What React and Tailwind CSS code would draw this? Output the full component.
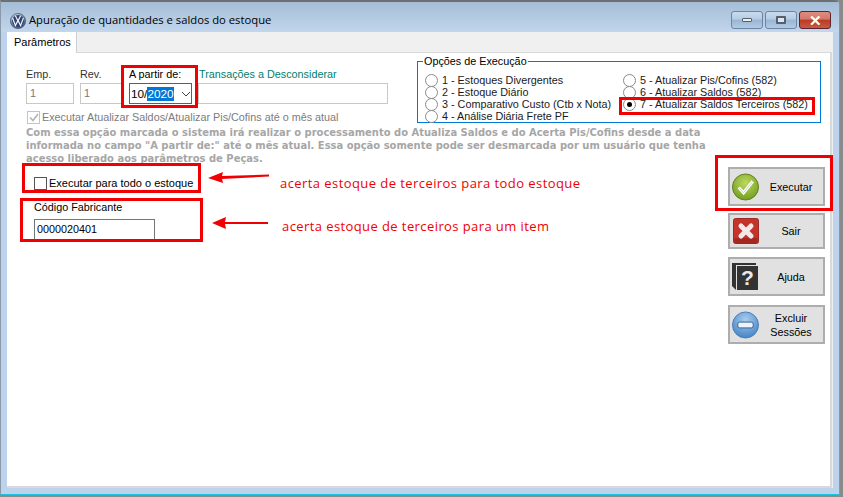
import React from "react";

const font = { fontFamily: '"Liberation Sans", Arial, sans-serif' };

function VwLogo() {
  return (
    <svg width="16" height="16" viewBox="0 0 16 16" className="shrink-0">
      <defs>
        <radialGradient id="vw" cx="40%" cy="30%" r="80%">
          <stop offset="0" stopColor="#e8eef6" />
          <stop offset="0.6" stopColor="#6f86a6" />
          <stop offset="1" stopColor="#2b3a55" />
        </radialGradient>
      </defs>
      <circle cx="8" cy="8" r="7.6" fill="url(#vw)" stroke="#3b4660" strokeWidth="0.6" />
      <circle cx="8" cy="8" r="6" fill="#2f4472" />
      <path d="M5.4 2.8 L8 8 L10.6 2.8 M2.6 5 L5.4 12.6 L8 7.4 L10.6 12.6 L13.4 5" fill="none" stroke="#f2f5f9" strokeWidth="1.2" />
    </svg>
  );
}

function WinButton({ close, children }) {
  return (
    <div
      className={
        close
          ? "w-[32px] h-[18px] rounded-[3px] border border-[#5d2330] bg-[linear-gradient(#dd8d7e_0%,#d4786a_45%,#b83c22_50%,#c65a44_100%)] flex items-center justify-center"
          : "w-[32px] h-[18px] rounded-[3px] border border-[#6f84a3] bg-[linear-gradient(#c9dbee_0%,#b6cce4_45%,#98b5d3_50%,#b3cbe3_100%)] flex items-center justify-center"
      }
    >
      {children}
    </div>
  );
}

function Radio({ checked, label }) {
  return (
    <div className="h-[12px] flex items-center">
      <span className="relative w-[13px] h-[13px] shrink-0 rounded-full border border-[#8a8a8a] bg-white flex items-center justify-center">
        {checked && <span className="w-[5px] h-[5px] rounded-full bg-black" />}
      </span>
      <span className="ml-[4px] whitespace-nowrap text-[10.8px] leading-[12px] text-[#1a1a1a]">{label}</span>
    </div>
  );
}

function ActionButton({ icon, children }) {
  return (
    <div className="w-[97px] h-full bg-[#e1e1e1] border-2 border-[#adadad] flex items-center pl-[2px] text-[10.8px] leading-[14px] text-black">
      <span className="w-[27px] shrink-0 flex justify-center">{icon}</span>
      <span className="flex-1 text-center">{children}</span>
    </div>
  );
}

function CheckIcon() {
  return (
    <svg width="28" height="28" viewBox="0 0 28 28">
      <defs>
        <radialGradient id="green" cx="50%" cy="35%" r="70%">
          <stop offset="0" stopColor="#bcd95e" />
          <stop offset="1" stopColor="#6f9a1f" />
        </radialGradient>
      </defs>
      <circle cx="14" cy="14" r="13.5" fill="url(#green)" stroke="#5c7f22" />
      <path d="M7 14.5 L12 20 L21.5 8" fill="none" stroke="#ffffff" strokeWidth="3.2" />
      <path d="M7 14.5 L12 20 L21.5 8" fill="none" stroke="#c9cfc0" strokeWidth="1" />
    </svg>
  );
}

function CloseIcon() {
  return (
    <svg width="26" height="26" viewBox="0 0 26 26">
      <rect x="0.5" y="0.5" width="25" height="25" rx="2" fill="#c4342c" stroke="#9c2a25" />
      <rect x="1.5" y="20" width="23" height="5" fill="#a5281f" />
      <path d="M8 8 L18 18 M18 8 L8 18" stroke="#f4e8e8" strokeWidth="5" strokeLinecap="round" />
    </svg>
  );
}

function BookIcon() {
  return (
    <svg width="27" height="29" viewBox="0 0 27 29">
      <path d="M0 1 L24 1 L24 3 L4 3 L4 28 L0 24 Z" fill="#333333" />
      <rect x="5" y="4" width="21" height="24" fill="#333333" />
      <text x="15.5" y="23" textAnchor="middle" fill="#e8e8e8" fontSize="21" fontWeight="700" fontFamily="Liberation Sans, sans-serif">?</text>
    </svg>
  );
}

function MinusIcon() {
  return (
    <svg width="28" height="28" viewBox="0 0 28 28">
      <defs>
        <radialGradient id="blue" cx="50%" cy="30%" r="75%">
          <stop offset="0" stopColor="#a9cdf0" />
          <stop offset="1" stopColor="#3f7fc2" />
        </radialGradient>
      </defs>
      <circle cx="14" cy="14" r="13.5" fill="url(#blue)" stroke="#4c7fb5" />
      <rect x="6" y="11" width="16" height="6" rx="2" fill="#eef3f8" stroke="#2f5f96" />
    </svg>
  );
}

function RedBox({ className }) {
  return <div className={"absolute border-[3px] border-[#f00000] pointer-events-none " + className} />;
}

export default function App() {
  return (
    <div style={font} className="relative w-[843px] h-[497px] overflow-hidden bg-[#8a8a8a]">
      <div className="w-[840px] h-[495px] rounded-tr-[6px] border-t-2 border-t-[#6f6f6f] border-b border-b-[#18c4e0] border-r border-r-[#18c4e0] border-l border-l-[#8a9aaa] bg-[#bdd2ec] flex flex-col">
        {/* title bar */}
        <div className="h-[30px] shrink-0 flex pl-[9px] pr-[8px] bg-[linear-gradient(#a4bdd6,#c2d6ec)]">
          <div className="flex items-center mt-[7px]">
            <VwLogo />
            <span className="ml-[3px] text-[11.25px] text-black whitespace-nowrap" style={{ fontFamily: '"Open Sans", sans-serif' }}>Apuração de quantidades e saldos do estoque</span>
          </div>
          <div className="ml-auto flex gap-[2px] pt-[9px]">
            <WinButton>
              <span className="w-[10px] h-[4px] rounded-[1px] bg-[#eeeeee] border border-[#55606e]" />
            </WinButton>
            <WinButton>
              <span className="w-[10px] h-[8px] rounded-[1px] border-2 border-[#55606e] bg-[#dfe6ee]" />
            </WinButton>
            <WinButton close>
              <span className="text-white font-bold text-[15px] leading-[15px]">✕</span>
            </WinButton>
          </div>
        </div>

        {/* client */}
        <div className="flex-1 ml-[6px] mr-[6px] mb-[6px] bg-[#f0f0f0] flex flex-col">
          <div className="h-[20px] shrink-0 flex">
            <div className="w-[70px] h-[21px] z-10 bg-white border-r border-r-[#d0d0d0] text-[11px] leading-[20px] pl-[7px] text-black">Parâmetros</div>
          </div>
          <div className="flex-1 mr-[1px] bg-white border-t border-t-[#d9d9d9] border-r-2 border-r-[#d9d9d9] border-b-2 border-b-[#d9d9d9] pl-[19px] pt-[8px]">
            <div className="flex">
              {/* fields */}
              <div className="w-[390px] shrink-0 pt-[6px]">
                <div className="flex text-[10.8px] leading-[14px]">
                  <div className="w-[54px] flex flex-col">
                    <span className="text-[#333333]">Emp.</span>
                    <div className="mt-[2px] w-[48px] h-[21px] border border-[#c8c8c8] text-[#777777] pl-[3px] leading-[19px]">1</div>
                  </div>
                  <div className="w-[49px] flex flex-col">
                    <span className="text-[#333333]">Rev.</span>
                    <div className="mt-[2px] w-[42px] h-[21px] border border-[#c8c8c8] text-[#777777] pl-[3px] leading-[19px]">1</div>
                  </div>
                  <div className="w-[69px] flex flex-col">
                    <span className="whitespace-nowrap text-black">A partir de:</span>
                    <div className="mt-[2px] w-[63px] h-[21px] border border-[#0078d7] bg-white flex items-center pl-[1px] text-[11.8px] text-black">
                      <span>10/</span>
                      <span className="bg-[#0078d7] text-white">2020</span>
                      <svg width="10" height="6" viewBox="0 0 10 6" className="ml-[7px]">
                        <path d="M1 1 L5 5 L9 1" fill="none" stroke="#444444" strokeWidth="1" />
                      </svg>
                    </div>
                  </div>
                  <div className="w-[190px] flex flex-col">
                    <span className="whitespace-nowrap text-[#00806b] pl-[1px]">Transações a Desconsiderar</span>
                    <div className="mt-[2px] h-[21px] border border-[#c8c8c8]" />
                  </div>
                </div>
                <div className="mt-[6px] ml-[1px] flex items-center h-[14px]">
                  <span className="w-[13px] h-[13px] shrink-0 border border-[#c4c4c4] flex items-center justify-center">
                    <svg width="10" height="9" viewBox="0 0 10 9">
                      <path d="M1 4.5 L4 7.5 L9 1" fill="none" stroke="#b4b4b4" strokeWidth="1.6" />
                    </svg>
                  </span>
                  <span className="ml-[2px] whitespace-nowrap text-[10.8px] text-[#7c7c7c]">Executar Atualizar Saldos/Atualizar Pis/Cofins até o mês atual</span>
                </div>
              </div>

              {/* group box */}
              <div className="relative w-[404px] h-[62px] ml-[1px] border border-[#0078d7] pl-[7px] pt-[12px] flex">
                <span className="absolute left-[5px] -top-[8px] bg-white px-[1px] text-[10.8px] leading-[14px] text-black">Opções de Execução</span>
                <div className="w-[198px] flex flex-col">
                  <Radio label="1 - Estoques Divergentes" />
                  <Radio label="2 - Estoque Diário" />
                  <Radio label="3 - Comparativo Custo (Ctb x Nota)" />
                  <Radio label="4 - Análise Diária Frete PF" />
                </div>
                <div className="flex flex-col">
                  <Radio label="5 - Atualizar Pis/Cofins (582)" />
                  <Radio label="6 - Atualizar Saldos (582)" />
                  <Radio checked label="7 - Atualizar Saldos Terceiros (582)" />
                </div>
              </div>
            </div>

            <p
              className="mt-[2px] whitespace-nowrap text-[9.97px] leading-[13px] font-bold text-[#a6a6a6]"
              style={{ fontFamily: '"DejaVu Sans", sans-serif' }}
            >
              Com essa opção marcada o sistema irá realizar o processamento do Atualiza Saldos e do Acerta Pis/Cofins desde a data
              <br />
              informada no campo "A partir de:" até o mês atual. Essa opção somente pode ser desmarcada por um usuário que tenha
              <br />
              acesso liberado aos parâmetros de Peças.
            </p>

            <div className="flex mt-[2px]">
              <div className="w-[702px] shrink-0 pl-[8px] pt-[9px]">
                <div className="flex items-center h-[14px]">
                  <span className="w-[13px] h-[13px] border border-[#555555] bg-white" />
                  <span className="ml-[2px] text-[11px] text-black">Executar para todo o estoque</span>
                </div>
                <div className="mt-[10px] text-[10.8px] leading-[14px] text-black">Código Fabricante</div>
                <div className="mt-[5px] w-[121px] h-[21px] border border-[#767676] pl-[2px] text-[10.8px] leading-[19px] text-black">0000020401</div>
              </div>
              <div className="flex flex-col">
                <div className="h-[39px] flex">
                  <ActionButton icon={<CheckIcon />}>Executar</ActionButton>
                </div>
                <div className="mt-[7px] h-[36px] flex">
                  <ActionButton icon={<CloseIcon />}>Sair</ActionButton>
                </div>
                <div className="mt-[8px] h-[39px] flex">
                  <ActionButton icon={<BookIcon />}>Ajuda</ActionButton>
                </div>
                <div className="mt-[9px] h-[39px] flex">
                  <ActionButton icon={<MinusIcon />}>Excluir<br />Sessões</ActionButton>
                </div>
              </div>
            </div>
          </div>
        </div>
      </div>

      {/* annotations drawn over the screenshot */}
      <RedBox className="left-[121px] top-[65px] w-[77px] h-[43px]" />
      <RedBox className="left-[619px] top-[97px] w-[196px] h-[18px]" />
      <RedBox className="left-[22px] top-[163px] w-[179px] h-[30px]" />
      <RedBox className="left-[20px] top-[198px] w-[183px] h-[44px]" />
      <RedBox className="left-[715px] top-[155px] w-[118px] h-[56px]" />
      <svg className="absolute left-[205px] top-[168px]" width="70" height="20" viewBox="0 0 70 20">
        <path d="M3 10 L18 4 L17 8 L64 6.5 L64 8.5 L17 11 L18 15 Z" fill="#f00000" />
      </svg>
      <svg className="absolute left-[209px] top-[214px]" width="62" height="18" viewBox="0 0 62 18">
        <path d="M3 9 L17 3 L16 8 L59 8 L59 10 L16 10 L17 15 Z" fill="#f00000" />
      </svg>
      <span className="absolute left-[280px] top-[174px] text-[13px] tracking-[0.43px] leading-[18px] text-[#f00000] whitespace-nowrap" style={{ fontFamily: '"Open Sans", sans-serif' }}>acerta estoque de terceiros para todo estoque</span>
      <span className="absolute left-[282px] top-[217px] text-[13px] tracking-[0.41px] leading-[18px] text-[#f00000] whitespace-nowrap" style={{ fontFamily: '"Open Sans", sans-serif' }}>acerta estoque de terceiros para um item</span>
    </div>
  );
}
